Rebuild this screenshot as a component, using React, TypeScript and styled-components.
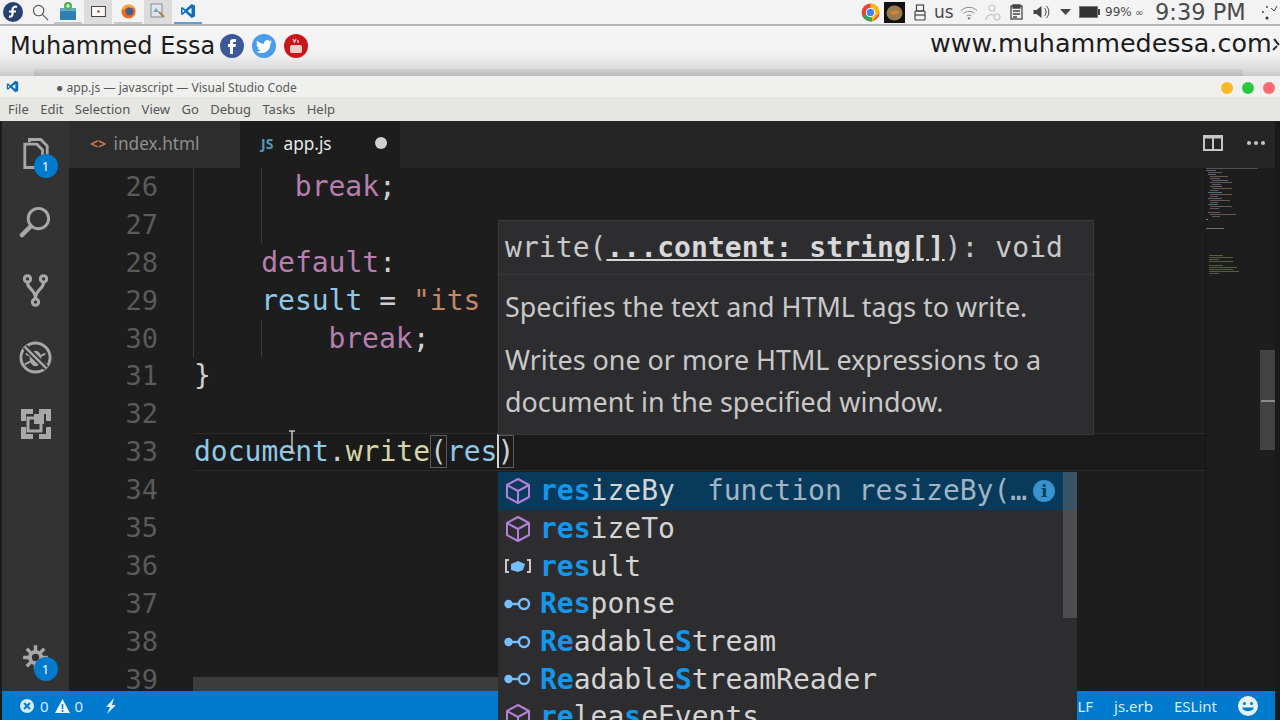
import React from 'react';
import styled, { createGlobalStyle } from 'styled-components';

const Global = createGlobalStyle`
  html, body { margin: 0; padding: 0; width: 1280px; height: 720px; overflow: hidden; background: #f0f0f0; }
  #root { width: 1280px; height: 720px; }
`;

const Page = styled.div`
  width: 1280px; height: 720px; display: flex; flex-direction: column; overflow: hidden;
  font-family: "Noto Sans", sans-serif;
`;

const SysBar = styled.div`
  height: 26px; flex: none; box-sizing: border-box; background: #f3f3f3; border-bottom: 2px solid #b4b4b4;
  display: flex; align-items: flex-start;
`;
const Launcher = styled.div<{ $w: number }>`
  width: ${p => p.$w}px; height: 24px; display: flex; align-items: center; justify-content: center; flex: none;
`;
const Task = styled.div<{ $bg?: string; $line?: string }>`
  width: 28px; height: 24px; display: flex; align-items: center; justify-content: center; flex: none; box-sizing: border-box;
  margin-right: 2px; background: ${p => p.$bg || 'transparent'}; border-bottom: 2px solid ${p => p.$line || 'transparent'};
`;
const Tray = styled.div`
  margin-left: auto; display: flex; align-items: center; height: 24px; width: 419px; flex: none; box-sizing: border-box; overflow: hidden;
`;
const TrayIcon = styled.svg<{ $ml: number }>`
  margin-left: ${p => p.$ml}px; flex: none;
`;
const TrayText = styled.span<{ $size: number; $ml: number; $w: number }>`
  font-family: "DejaVu Sans", sans-serif; font-size: ${p => p.$size}px; margin-left: ${p => p.$ml}px; width: ${p => p.$w}px;
  flex: none; white-space: nowrap; color: #4a4a4a;
`;

const Banner = styled.div`
  height: 50px; flex: none; position: relative; display: flex; align-items: flex-start; justify-content: space-between;
  background: linear-gradient(#f5f5f5 0, #f2f2f2 55%, #dcdcdc 85%, #c9c9c9 100%);
  font-family: "DejaVu Sans", sans-serif; color: #1c1c1c; box-sizing: border-box; padding: 6px 0 0 10px;
  &::after {
    content: ""; position: absolute; left: 34px; right: 37px; top: 43px; height: 7px;
    background: linear-gradient(#d2d2d2, #b6b6b6);
  }
`;
const Brand = styled.div`
  font-size: 24px; line-height: 28px; display: flex; align-items: center;
`;
const Socials = styled.div`
  display: flex; gap: 8px; margin-left: 5px;
`;
const Social = styled.div<{ $bg: string }>`
  width: 24px; height: 24px; border-radius: 50%; background: ${p => p.$bg}; display: flex; align-items: center; justify-content: center;
`;
const Site = styled.div`
  font-size: 25.4px; line-height: 28px; white-space: nowrap; width: 350px; flex: none; margin-top: -3px; display: flex; align-items: center;
`;

const Win = styled.div`
  flex: 1; min-height: 0; display: flex; flex-direction: column; position: relative; background: #1a1a1a;
`;
const TitleBar = styled.div`
  height: 21px; flex: none; background: #f0f0ee; display: flex; align-items: center; padding: 0 5px 0 6px;
`;
const TitleText = styled.div`
  margin-left: 37px; flex: 1; font-size: 12.1px; line-height: 21px; padding-top: 2px; color: #5a5a5a;
`;
const Dots = styled.div`
  display: flex; gap: 9px; padding-top: 3px;
`;
const Dot = styled.div<{ $c: string }>`
  width: 12px; height: 12px; border-radius: 50%; background: ${p => p.$c};
`;
const MenuBar = styled.div`
  height: 24px; flex: none; background: #e6e6e3; display: flex; align-items: center; padding-left: 8px;
  gap: 11.4px; font-size: 13px; color: #555; box-sizing: border-box;
`;
const Body = styled.div`
  flex: 1; min-height: 0; display: flex; margin: 0 5px 0 2px;
`;
const Activity = styled.div`
  width: 67px; flex: none; background: #333; display: flex; flex-direction: column; align-items: center; padding-top: 16px; box-sizing: border-box;
`;
const ActIcon = styled.div`
  height: 68px; width: 48px; display: flex; justify-content: center; position: relative; flex: none;
`;
const Gear = styled(ActIcon)`
  margin-top: auto; height: 47px;
`;
const Badge = styled.div<{ $top: number }>`
  position: absolute; left: 22px; top: ${p => p.$top}px; width: 24px; height: 24px; border-radius: 50%; background: #007acc; color: #fff;
  font-size: 13px; display: flex; align-items: center; justify-content: center;
`;
const Main = styled.div`
  flex: 1; min-width: 0; display: flex; flex-direction: column;
`;
const Tabs = styled.div`
  height: 47px; flex: none; background: #252526; display: flex; align-items: stretch;
`;
const Tab = styled.div<{ $active?: boolean }>`
  width: ${p => (p.$active ? 160 : 171)}px; flex: none; display: flex; align-items: center; box-sizing: border-box;
  background: ${p => (p.$active ? '#1d1d1d' : '#2d2d2d')}; padding: 0 0 3px 21px;
  font-size: 17.2px; color: ${p => (p.$active ? '#e8e8e8' : '#8f8f8f')};
`;
const TabIcon = styled.span<{ $c: string; $w: number }>`
  color: ${p => p.$c}; font-size: 14px; font-weight: 700; width: ${p => p.$w}px; flex: none;
`;
const TabDot = styled.span`
  width: 12px; height: 12px; border-radius: 50%; background: #d0d0d0; margin-left: auto; margin-right: 13px;
`;
const TabActions = styled.div`
  margin-left: auto; display: flex; align-items: center; gap: 24px; padding: 0 10px 3px 0;
`;

const Editor = styled.div`
  flex: 1; min-height: 0; display: flex; background: #1d1d1d; position: relative; overflow: hidden;
`;
const Gutter = styled.div`
  width: 125px; flex: none;
`;
const LineNo = styled.div`
  height: 37.9px; line-height: 37.9px; text-align: right; padding-right: 36px;
  font-family: "DejaVu Sans Mono", monospace; font-size: 27px; color: #5a5a5a;
`;
const Code = styled.div`
  flex: 1; min-width: 0; position: relative;
`;
const Line = styled.div<{ $indent?: number; $current?: boolean }>`
  height: 37.9px; line-height: 37.9px; white-space: pre; box-sizing: border-box;
  font-family: "DejaVu Sans Mono", monospace; font-size: 28px; color: #cfcfcf;
  padding-left: ${p => (p.$indent || 0) * 16.8}px;
  ${p => (p.$current ? 'background: #1b1b1b; box-shadow: inset 0 1px 0 #2b2b2b, inset 0 -1px 0 #2b2b2b; margin-right: 70px;' : '')}
`;
const Kw = styled.span`color: #b67fb0;`;
const Va = styled.span`color: #8fc9e8;`;
const Fn = styled.span`color: #d5d5a6;`;
const St = styled.span`color: #c2866a;`;
const Br = styled.span`outline: 1px solid #5a5a5a; outline-offset: -1px;`;
const IndentGuide = styled.div<{ $x: number; $y: number; $h: number }>`
  position: absolute; left: ${p => p.$x}px; top: ${p => p.$y}px; height: ${p => p.$h}px; width: 1px; background: #3a3a3a;
`;
const Caret = styled.div`
  position: absolute; left: 303px; top: 266px; width: 2px; height: 34px; background: #d4d4d4;
`;
const MouseCursor = styled.svg`
  position: absolute; left: 94px; top: 262px;
`;

const Right = styled.div`
  position: absolute; right: 0; top: 0; bottom: 0; width: 70px; border-left: 1px solid #171717; box-sizing: border-box;
`;
const Minimap = styled.svg`
  position: absolute; left: 0; top: 0; opacity: 0.7;
`;
const ScrollThumb = styled.div`
  position: absolute; right: 0; top: 182px; width: 15px; height: 100px; background: #424242;
  &::after { content: ""; position: absolute; left: 1px; right: 0; top: 50px; height: 2px; background: #8a8a8a; }
`;
const HScroll = styled.div`
  position: absolute; left: 124px; bottom: 0; width: 800px; height: 14px; background: #3c3c3c;
`;

const Hover = styled.div`
  position: absolute; left: 304px; top: 52px; width: 596px; height: 215px; background: #2d2d30; box-sizing: border-box;
  color: #c8c8c8; border: 1px solid #3a3a3c;
`;
const HoverSig = styled.div`
  height: 54px; line-height: 53px; padding-left: 6px; border-bottom: 1px solid #38383a; box-sizing: border-box;
  font-family: "DejaVu Sans Mono", monospace; font-size: 28px; white-space: pre; letter-spacing: 0.05px;
  b { font-weight: 700; text-decoration: underline; color: #d8d8d8; }
`;
const HoverP = styled.div`
  padding: 0 6px; font-size: 26.9px; line-height: 42px; margin-top: 11px; white-space: pre;
`;

const Suggest = styled.div`
  position: absolute; left: 498px; top: 396px; width: 579px; height: 248px; background: #2d2d30; box-sizing: border-box; z-index: 5;
  overflow: hidden; font-family: "DejaVu Sans Mono", monospace; font-size: 28px;
`;
const SugRow = styled.div<{ $sel?: boolean }>`
  height: 37.7px; display: flex; align-items: center; box-sizing: border-box; padding-left: 6px; flex: none;
  background: ${p => (p.$sel ? '#083a5c' : 'transparent')}; color: #d4d4d4; white-space: pre;
`;
const SugIcon = styled.span`
  width: 28px; height: 28px; flex: none; margin-right: 8px; display: flex; align-items: center; justify-content: center;
`;
const Hit = styled.span`color: #1497ea; font-weight: 700;`;
const Detail = styled.span`
  color: #9fb4c4; margin-left: 32px;
`;
const Info = styled.span`
  width: 22px; height: 22px; border-radius: 50%; background: #3794d0; color: #083a5c; margin-left: 6px; display: flex; align-items: center; justify-content: center;
  font: 700 17px "DejaVu Serif", serif;
`;
const SugScroll = styled.div`
  position: absolute; right: 0; top: 0; width: 14px; height: 146px; background: rgba(110,110,110,.5);
`;

const Status = styled.div`
  height: 29px; flex: none; background: #007acc; display: flex; align-items: center; color: #d8ecfa; font-size: 15px; margin: 0 5px 0 2px; padding-left: 17px;
`;
const StatusItem = styled.span<{ $ml?: number }>`
  display: inline-flex; align-items: center; margin-left: ${p => p.$ml || 0}px;
`;
const StatusRight = styled.div`
  margin-left: auto; display: flex; align-items: center; gap: 21px; padding-right: 17px;
`;

const Cube = () => (
  <svg width="26" height="28" viewBox="0 0 26 28" fill="none" stroke="#b180d7" strokeWidth="2" strokeLinejoin="round">
    <path d="M13 2 24 8v12l-11 6-11-6V8z" /><path d="M2 8l11 6 11-6M13 14v12" />
  </svg>
);
const Klass = () => (
  <svg width="28" height="14" viewBox="0 0 28 14" fill="none" stroke="#75beff" strokeWidth="2.4">
    <circle cx="4.5" cy="7" r="3" fill="#75beff" /><path d="M8 7h7" /><circle cx="20" cy="7" r="5" />
  </svg>
);
const VarIcon = () => (
  <svg width="28" height="18" viewBox="0 0 28 18">
    <path d="M5 3H2v12h3M23 3h3v12h-3" fill="none" stroke="#c8c8c8" strokeWidth="2" />
    <path d="M7 7l7-3 7 3-2 6-5 2-7-2z" fill="#75beff" />
  </svg>
);
const VSLogo = ({ size = 16 }: { size?: number }) => (
  <svg width={size} height={size} viewBox="0 0 16 16">
    <path d="M11.500 1 15 2.600v10.800L11.500 15 5.500 9.500 2.400 12 1 11.200V4.800L2.400 4l3.100 2.500zM11.500 4.800 7.600 8l3.900 3.200zM2.600 6v4L4.400 8z" fill="#0e6fbe" />
  </svg>
);

const lines: React.ReactNode[] = [
  <Line key={26} $indent={6}><Kw>break</Kw>;</Line>,
  <Line key={27} />,
  <Line key={28} $indent={4}><Kw>default</Kw>:</Line>,
  <Line key={29} $indent={4}><Va>result</Va> = <St>"its</St></Line>,
  <Line key={30} $indent={8}><Kw>break</Kw>;</Line>,
  <Line key={31}>{'}'}</Line>,
  <Line key={32} />,
  <Line key={33} $current><Va>document</Va>.<Fn>write</Fn><Br>(</Br><Va>res</Va><Br>)</Br></Line>,
];

// Minimap strokes: [y, x, width, colour]
const miniCode: [number, number, number, string][] = [
  [0, 0, 52, '#6a6a6a'], [2, 0, 10, '#6a8a9a'], [4, 2, 14, '#8a6a8a'], [6, 2, 8, '#7a8aa0'], [8, 4, 18, '#8a7060'],
  [10, 4, 10, '#8a6a8a'], [12, 6, 16, '#6a8a9a'], [14, 4, 22, '#8a7060'], [16, 6, 9, '#8a6a8a'], [18, 4, 12, '#6a8a9a'],
  [20, 6, 20, '#8a7060'], [22, 4, 8, '#8a6a8a'], [24, 2, 14, '#6a8a9a'], [26, 4, 22, '#8a7060'], [28, 4, 8, '#8a6a8a'],
  [30, 2, 14, '#6a8a9a'], [32, 4, 20, '#8a7060'], [34, 4, 8, '#8a6a8a'], [36, 2, 10, '#6a8a9a'], [38, 4, 22, '#8a7060'],
  [40, 4, 9, '#8a6a8a'], [44, 2, 12, '#8a6a8a'], [46, 4, 26, '#8a7060'], [48, 6, 8, '#8a6a8a'], [51, 0, 2, '#aaa'], [60, 0, 18, '#8a9aa8'],
  [87, 3, 14, '#6a7a50'], [89, 3, 24, '#6a7a50'], [91, 3, 10, '#6a7a50'], [93, 3, 24, '#6a7a50'], [97, 3, 14, '#6a7a50'],
  [99, 3, 28, '#6a7a50'], [101, 3, 24, '#6a7a50'], [103, 3, 30, '#6a7a50'], [105, 3, 10, '#6a7a50'],
];

const nums = [26, 27, 28, 29, 30, 31, 32, 33, 34, 35, 36, 37, 38, 39];

export default function App() {
  return (
    <Page>
      <Global />
      <SysBar>
        <Launcher $w={26}>
          <svg width="20" height="20" viewBox="0 0 20 20"><circle cx="10" cy="10" r="10" fill="#294172" /><path d="M14 5c-2.500-1-4.500.3-4.500 3v4c0 2-1.500 3-3.500 2.500M6 9.500h7" stroke="#fff" strokeWidth="2.200" fill="none" /></svg>
        </Launcher>
        <Launcher $w={28}>
          <svg width="17" height="17" viewBox="0 0 18 18" fill="none" stroke="#555" strokeWidth="1.200"><circle cx="7" cy="7" r="5.500" /><path d="m11 11 6 6" /></svg>
        </Launcher>
        <Task $line="#c8c8c8">
          <svg width="16" height="18" viewBox="0 0 16 18"><rect x="0" y="6" width="16" height="12" fill="#2f7fb5" /><rect x="0" y="6" width="16" height="3" fill="#65a8d4" /><circle cx="8" cy="4" r="4" fill="#4caf50" /><path d="M8 2v4M6 4h4" stroke="#fff" strokeWidth="1.200" /></svg>
        </Task>
        <Task $bg="#dcdcdc">
          <svg width="15" height="11" viewBox="0 0 16 12"><rect x=".5" y=".5" width="15" height="11" fill="#fafafa" stroke="#333" /><circle cx="8" cy="6" r="1.300" fill="#d22" /></svg>
        </Task>
        <Task $line="#c8c8c8">
          <svg width="15" height="15" viewBox="0 0 16 16"><circle cx="8" cy="8" r="7.500" fill="#e76a1f" /><circle cx="9" cy="8" r="4" fill="#3f5f8f" /><path d="M2 6c2-5 9-5 11-2" stroke="#f9b233" strokeWidth="2" fill="none" /></svg>
        </Task>
        <Task $bg="#dcdcdc">
          <svg width="16" height="16" viewBox="0 0 16 16"><rect x="1" y="1" width="11" height="13" fill="#dfe6ee" stroke="#889" /><path d="M3 9l3-4 3 4z" fill="#7fa0c8" /><path d="M9 9l5 5" stroke="#b08030" strokeWidth="2" /></svg>
        </Task>
        <Task $line="#5a9fd8"><VSLogo size={16} /></Task>
        <Tray>
          <TrayIcon $ml={0} width="19" height="19" viewBox="0 0 18 18"><circle cx="9" cy="9" r="8.500" fill="#e94235" /><path d="M9 9 1.500 12A8.500 8.500 0 0 0 11 17.300z" fill="#34a853" /><path d="M9 .5A8.500 8.500 0 0 1 17.500 9L11 17.300 9 9z" fill="#fbbc05" /><circle cx="9" cy="9" r="4" fill="#4285f4" stroke="#fff" strokeWidth="1" /></TrayIcon>
          <TrayIcon $ml={4} width="21" height="21" viewBox="0 0 21 21"><rect width="21" height="21" fill="#111" /><ellipse cx="10.500" cy="11" rx="8" ry="7.500" fill="#9a7a50" /><path d="M6 11c3-3 6-3 9-1-2 3-6 4-9 1" fill="#d9832c" /></TrayIcon>
          <TrayIcon $ml={9} width="12" height="17" viewBox="0 0 12 17" fill="none" stroke="#444" strokeWidth="1.200"><rect x="2.500" y="1" width="7" height="6" /><rect x="1" y="7" width="10" height="9" rx="1" /><path d="M1 11h10" /></TrayIcon>
          <TrayText $size={17} $ml={8} $w={26}>us</TrayText>
          <TrayIcon $ml={0} width="18" height="15" viewBox="0 0 20 16" fill="none" stroke="#888" strokeWidth="1.100"><path d="M1 6c5-5 13-5 18 0M4 9c3.500-3 8.500-3 12 0M7 12c2-1.500 4-1.500 6 0" /><circle cx="10" cy="14.500" r="1" fill="#666" /></TrayIcon>
          <TrayIcon $ml={7} width="16" height="17" viewBox="0 0 16 17" fill="none" stroke="#c4c4c4" strokeWidth="1.100"><circle cx="7" cy="4" r="3" /><path d="M1 16c0-5 5-6 8-5" /><circle cx="12" cy="13" r="3" /></TrayIcon>
          <TrayIcon $ml={9} width="13" height="16" viewBox="0 0 13 16" fill="none" stroke="#444" strokeWidth="1.300"><rect x="1" y="2" width="11" height="13" /><path d="M3 1h7v3H3z" fill="#444" /><path d="M3 7h7M3 10h7M3 13h4" /></TrayIcon>
          <TrayIcon $ml={10} width="17" height="14" viewBox="0 0 16 14"><path d="M0 5h3l5-4v12l-5-4H0z" fill="#444" /><path d="M11 3c2 2 2 6 0 8M13 1c3 3 3 9 0 12" stroke="#444" fill="none" /></TrayIcon>
          <TrayIcon $ml={10} width="11" height="7" viewBox="0 0 11 7"><path d="M0 0h11L5.500 6z" fill="#444" /></TrayIcon>
          <TrayIcon $ml={8} width="21" height="12" viewBox="0 0 21 12"><rect x=".5" y=".5" width="18" height="11" fill="#333" stroke="#777" /><rect x="19" y="3" width="2" height="6" fill="#444" /></TrayIcon>
          <TrayText $size={12} $ml={5} $w={30}>99%</TrayText>
          <TrayText $size={10} $ml={0} $w={20}>∞</TrayText>
          <TrayText $size={22.5} $ml={0} $w={105}>9:39 PM</TrayText>
          <TrayIcon $ml={0} width="20" height="16" viewBox="0 0 20 16"><circle cx="3" cy="8" r="1" fill="#444" /><circle cx="7" cy="3" r="1" fill="#444" /><circle cx="7" cy="14" r="1.500" fill="#333" /><path d="M11 4l3 3 3-5" stroke="#444" fill="none" /></TrayIcon>
        </Tray>
      </SysBar>
      <Banner>
        <Brand>
          Muhammed Essa
          <Socials>
            <Social $bg="#3b5998"><svg width="12" height="16" viewBox="0 0 12 16"><path d="M4 16V9H2V6h2V4c0-2 1-3 3.500-3H10v3H8c-.6 0-1 .4-1 1v1h3l-.5 3H7v7z" fill="#fff" /></svg></Social>
            <Social $bg="#4a9ced"><svg width="16" height="13" viewBox="0 0 16 13"><path d="M16 1.600c-.6.300-1.200.4-1.900.5.700-.4 1.200-1 1.400-1.800-.6.400-1.300.6-2 .8A3.300 3.300 0 0 0 7.900 4C5.200 3.900 2.800 2.600 1.100.6c-.9 1.500-.4 3.400 1 4.400-.5 0-1-.2-1.500-.4 0 1.600 1.100 3 2.600 3.300-.5.100-1 .2-1.500.1.400 1.300 1.600 2.200 3.100 2.300A6.600 6.600 0 0 1 0 11.600 9.300 9.300 0 0 0 14.400 3.300c.6-.4 1.200-1 1.600-1.700z" fill="#fff" /></svg></Social>
            <Social $bg="#c8161d"><svg width="14" height="16" viewBox="0 0 14 16"><rect x="1" y="7" width="12" height="8" rx="2" fill="#f3caca" /><path d="M4 1l1.500 3L7 1M9 2v3" stroke="#f3caca" strokeWidth="1.300" fill="none" /></svg></Social>
          </Socials>
        </Brand>
        <Site>
          www.muhammedessa.com
          <svg width="8" height="20" viewBox="0 0 8 20"><path d="M2 6l5 6M1 17l4-4" stroke="#2a2a2a" strokeWidth="2" fill="none" /></svg>
        </Site>
      </Banner>
      <Win>
        <TitleBar>
          <VSLogo size={13} />
          <TitleText>● app.js — javascript — Visual Studio Code</TitleText>
          <Dots><Dot $c="#fbb928" /><Dot $c="#27c93f" /><Dot $c="#fc6a72" /></Dots>
        </TitleBar>
        <MenuBar>
          {['File', 'Edit', 'Selection', 'View', 'Go', 'Debug', 'Tasks', 'Help'].map(m => <span key={m}>{m}</span>)}
        </MenuBar>
        <Body>
          <Activity>
            <ActIcon>
              <svg width="28" height="33" viewBox="0 0 30 34" fill="none" stroke="#a8a8a8" strokeWidth="3"><path d="M8 5V2h12l7 7v18h-5" /><path d="M3 7h13l6 6v19H3z" /></svg>
              <Badge $top={17}>1</Badge>
            </ActIcon>
            <ActIcon>
              <svg width="33" height="33" viewBox="0 0 34 34" fill="none" stroke="#a8a8a8" strokeWidth="3"><circle cx="20" cy="14" r="10.500" /><path d="M12 22 3 31" strokeWidth="4.500" strokeLinecap="round" /></svg>
            </ActIcon>
            <ActIcon>
              <svg width="25" height="35" viewBox="0 0 28 38" fill="none" stroke="#a8a8a8" strokeWidth="3.500"><circle cx="5" cy="6" r="3.500" /><circle cx="23" cy="6" r="3.500" /><circle cx="14" cy="32" r="3.500" /><path d="M5 10c0 8 9 7 9 18M23 10c0 8-9 7-9 18" /></svg>
            </ActIcon>
            <ActIcon>
              <svg width="33" height="33" viewBox="0 0 34 34" fill="none" stroke="#a8a8a8" strokeWidth="3"><circle cx="17" cy="17" r="15" /><ellipse cx="17" cy="18" rx="6" ry="8" fill="#a8a8a8" stroke="none" /><path d="M7 13l6 3M27 13l-6 3M6 24l6-3M28 24l-6-3" strokeWidth="2" /><path d="M6 6l22 22" stroke="#333" strokeWidth="6" /><path d="M6 6l22 22" strokeWidth="2.500" /></svg>
            </ActIcon>
            <ActIcon>
              <svg width="30" height="30" viewBox="0 0 30 30"><path d="M0 0h12v5H5v7H0zM18 0h12v12h-5V5h-7zM0 18h5v7h7v5H0zM30 18v12H18v-5h7v-7z" fill="#a8a8a8" /><rect x="7" y="9" width="13" height="13" fill="none" stroke="#a8a8a8" strokeWidth="3" /><rect x="13" y="5" width="10" height="10" fill="#a8a8a8" /></svg>
            </ActIcon>
            <Gear>
              <svg width="27" height="27" viewBox="0 0 24 24" fill="none" stroke="#a8a8a8" strokeWidth="3.500"><circle cx="12" cy="12" r="5" /><path d="M12 1v5M12 18v5M1 12h5M18 12h5M4.200 4.200l3.500 3.500M16.300 16.300l3.500 3.500M19.800 4.200l-3.500 3.500M7.700 16.300l-3.500 3.500" strokeWidth="3" /></svg>
              <Badge $top={13}>1</Badge>
            </Gear>
          </Activity>
          <Main>
            <Tabs>
              <Tab>
                <TabIcon $c="#c87a46" $w={23.5}>{'<>'}</TabIcon>
                index.html
              </Tab>
              <Tab $active>
                <TabIcon $c="#519aba" $w={22.5}>JS</TabIcon>
                app.js
                <TabDot />
              </Tab>
              <TabActions>
                <svg width="20" height="16" viewBox="0 0 20 16" fill="none" stroke="#c5c5c5" strokeWidth="2"><rect x="1" y="1" width="18" height="14" /><path d="M10 1v14M1 2.500h18" /></svg>
                <svg width="18" height="4" viewBox="0 0 18 4" fill="#c5c5c5"><circle cx="2" cy="2" r="2" /><circle cx="9" cy="2" r="2" /><circle cx="16" cy="2" r="2" /></svg>
              </TabActions>
            </Tabs>
            <Editor>
              <Gutter>{nums.map(n => <LineNo key={n}>{n}</LineNo>)}</Gutter>
              <Code>
                {lines}
                <IndentGuide $x={-1} $y={0} $h={189} />
                <IndentGuide $x={67} $y={0} $h={75} />
                <IndentGuide $x={67} $y={152} $h={37} />
                <Caret />
                <MouseCursor width="8" height="24" viewBox="0 0 8 24"><path d="M1 1h6M4 1v22M1 23h6" stroke="#c9c4b4" strokeWidth="1.500" fill="none" /></MouseCursor>
                <Hover>
                  <HoverSig>write(<b>...content: string[]</b>): void</HoverSig>
                  <HoverP>Specifies the text and HTML tags to write.</HoverP>
                  <HoverP>{'Writes one or more HTML expressions to a\ndocument in the specified window.'}</HoverP>
                </Hover>
              </Code>
              <Right>
                <Minimap width="56" height="120" viewBox="0 0 56 120">
                  {miniCode.map(([y, x, w, c], i) => <rect key={i} x={x} y={y} width={w} height={1} fill={c} />)}
                </Minimap>
                <ScrollThumb />
              </Right>
              <HScroll />
            </Editor>
          </Main>
        </Body>
        <Status>
          <StatusItem>
            <svg width="16" height="16" viewBox="0 0 16 16"><circle cx="8" cy="8" r="7" fill="#d8ecfa" /><path d="M5 5l6 6M11 5l-6 6" stroke="#007acc" strokeWidth="2" /></svg>
          </StatusItem>
          <StatusItem $ml={5}>0</StatusItem>
          <StatusItem $ml={6}><svg width="15" height="14" viewBox="0 0 15 14"><path d="M7.500 0 15 14H0z" fill="#f0f6fb" /><path d="M7.500 5v5M7.500 11v2" stroke="#007acc" strokeWidth="1.500" /></svg></StatusItem>
          <StatusItem $ml={5}>0</StatusItem>
          <StatusItem $ml={22}><svg width="12" height="16" viewBox="0 0 12 16"><path d="M9 0 1 9h4l-3 7 9-9H7z" fill="#d8ecfa" /></svg></StatusItem>
          <StatusRight>
            <span>LF</span><span>js.erb</span><span>ESLint</span>
            <svg width="20" height="20" viewBox="0 0 20 20"><circle cx="10" cy="10" r="10" fill="#e8f4fc" /><circle cx="6.500" cy="7.500" r="1.500" fill="#007acc" /><circle cx="13.500" cy="7.500" r="1.500" fill="#007acc" /><path d="M4 11.500c1.500 5 10.500 5 12 0z" fill="#007acc" /></svg>
          </StatusRight>
        </Status>
        <Suggest>
          <SugRow $sel><SugIcon><Cube /></SugIcon><span><Hit>res</Hit>izeBy</span><Detail>function resizeBy(…</Detail><Info>i</Info></SugRow>
          <SugRow><SugIcon><Cube /></SugIcon><span><Hit>res</Hit>izeTo</span></SugRow>
          <SugRow><SugIcon><VarIcon /></SugIcon><span><Hit>res</Hit>ult</span></SugRow>
          <SugRow><SugIcon><Klass /></SugIcon><span><Hit>Res</Hit>ponse</span></SugRow>
          <SugRow><SugIcon><Klass /></SugIcon><span><Hit>Re</Hit>adable<Hit>S</Hit>tream</span></SugRow>
          <SugRow><SugIcon><Klass /></SugIcon><span><Hit>Re</Hit>adable<Hit>S</Hit>treamReader</span></SugRow>
          <SugRow><SugIcon><Cube /></SugIcon><span><Hit>re</Hit>lea<Hit>s</Hit>eEvents</span></SugRow>
          <SugScroll />
        </Suggest>
      </Win>
    </Page>
  );
}
